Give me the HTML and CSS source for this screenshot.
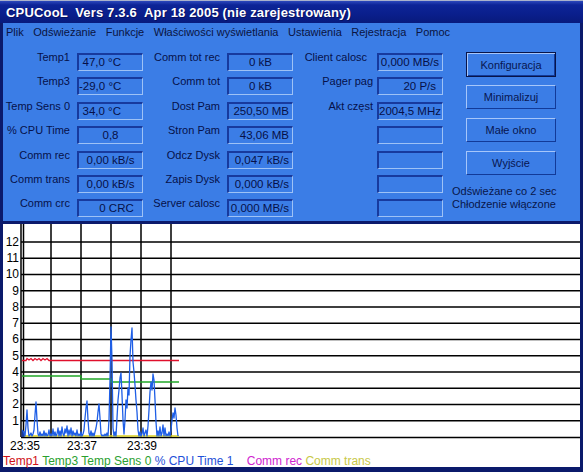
FILE: index.html
```html
<!DOCTYPE html>
<html lang="pl">
<head>
    <meta charset="UTF-8">
    <title>CPUCooL</title>
    <link rel="stylesheet" href="styles.css">
</head>
<body>
<div class="window">
    <div class="titlebar">CPUCooL  Vers 7.3.6  Apr 18 2005 (nie zarejestrowany)</div>
    <div class="frame">
        <div class="menubar">
            <span>Plik</span>
            <span>Odświeżanie</span>
            <span>Funkcje</span>
            <span>Właściwości wyświetlania</span>
            <span>Ustawienia</span>
            <span>Rejestracja</span>
            <span>Pomoc</span>
        </div>

        <div class="panel">
            <div class="grid">
                <div class="lbl">Temp1</div><div class="fld t">47,0 °C</div>
                <div class="lbl">Comm tot rec</div><div class="fld c">0 kB</div>
                <div class="lbl l3 cl">Client calosc</div><div class="fld r">0,000 MB/s</div>

                <div class="lbl">Temp3</div><div class="fld t">-29,0 °C</div>
                <div class="lbl">Comm tot</div><div class="fld c">0 kB</div>
                <div class="lbl l3">Pager pag</div><div class="fld r p6">20 P/s</div>

                <div class="lbl">Temp Sens 0</div><div class="fld t">34,0 °C</div>
                <div class="lbl">Dost Pam</div><div class="fld r">250,50 MB</div>
                <div class="lbl l3">Akt częst</div><div class="fld r">2004,5 MHz</div>

                <div class="lbl">% CPU Time</div><div class="fld c">0,8</div>
                <div class="lbl">Stron Pam</div><div class="fld r">43,06 MB</div>
                <div class="lbl l3"></div><div class="fld"></div>

                <div class="lbl">Comm rec</div><div class="fld c">0,00 kB/s</div>
                <div class="lbl">Odcz Dysk</div><div class="fld r">0,047 kB/s</div>
                <div class="lbl l3"></div><div class="fld"></div>

                <div class="lbl">Comm trans</div><div class="fld c">0,00 kB/s</div>
                <div class="lbl">Zapis Dysk</div><div class="fld r">0,000 kB/s</div>
                <div class="lbl l3"></div><div class="fld"></div>

                <div class="lbl">Comm crc</div><div class="fld c crc">0 CRC</div>
                <div class="lbl">Server calosc</div><div class="fld r">0,000 MB/s</div>
                <div class="lbl l3"></div><div class="fld"></div>
            </div>

            <div class="side">
                <div class="btn default">Konfiguracja</div>
                <div class="btn">Minimalizuj</div>
                <div class="btn">Małe okno</div>
                <div class="btn">Wyjście</div>
                <div class="status">Odświeżane co 2 sec<br>Chłodzenie włączone</div>
            </div>
        </div>

        <div class="chart">
            <svg width="577" height="231" viewBox="3 224 577 231">
                <!-- grid -->
                <path class="grid-h" d="M21 242H580 M21 258.25H580 M21 274.5H580 M21 290.75H580 M21 307H580 M21 323.25H580 M21 339.5H580 M21 355.75H580 M21 372H580 M21 388.25H580 M21 404.5H580 M21 420.75H580 M21 437.5H580"/>
                <path class="grid-v" d="M21 224V437 M23.5 224V437 M51 224V437 M81 224V437 M111 224V437 M141 224V437 M171 224V437"/>

                <g class="ylab">
                    <text x="19" y="246">12</text>
                    <text x="19" y="262">11</text>
                    <text x="19" y="278">10</text>
                    <text x="19" y="294.5">9</text>
                    <text x="19" y="310.5">8</text>
                    <text x="19" y="327">7</text>
                    <text x="19" y="343">6</text>
                    <text x="19" y="359.5">5</text>
                    <text x="19" y="375.5">4</text>
                    <text x="19" y="392">3</text>
                    <text x="19" y="408">2</text>
                    <text x="19" y="424.5">1</text>
                </g>
                <g class="xlab">
                    <text x="10" y="450">23:35</text>
                    <text x="67" y="450">23:37</text>
                    <text x="127" y="450">23:39</text>
                </g>

                <!-- series -->
                <path class="s-yellow" d="M22 436H179"/>
                <path class="s-green" d="M22 376H81V379H111V382H179"/>
                <polyline class="s-red" points="22,360.5 26,360.5 27,358.5 29,360 31,358.5 33,360.5 35,358.5 37,360 39,358.5 41,360.5 43,358.5 45,360 47,358.5 49,360.5 179,360.5"/>
                <rect class="s-blk" x="21.5" y="431" width="3" height="6"/>
                <polyline class="s-blue" points="22,430 23,431 24,433 25,436 26,425 27,410 28,428 29,436 30,435 31,433 32,436 33,434 34,430 35,415 36,402 37,420 38,434 39,436 40,432 41,436 42,434 43,436 44,431 45,436 46,433 47,436 48,435 49,430 50,436 51,434 52,436 53,429 54,436 55,432 56,436 57,434 58,428 59,436 60,431 61,436 62,427 63,434 64,436 65,429 66,433 67,426 68,436 69,430 70,435 71,428 72,436 73,431 74,435 75,433 76,436 77,430 78,436 79,434 80,436 81,432 82,436 83,434 84,430 85,418 86,408 87,401 88,420 89,433 90,436 91,431 92,436 93,433 94,436 95,432 96,428 97,422 98,412 99,404 100,418 101,434 102,436 103,435 104,436 105,434 106,436 107,433 108,436 109,420 110,380 111,327 112,360 113,428 114,436 115,432 116,436 117,418 118,400 119,390 120,378 121,373 122,395 123,420 124,434 125,420 126,400 127,408 128,388 129,395 130,356 131,340 132,328 133,362 134,372 135,385 136,400 137,412 138,430 139,436 140,432 141,436 142,434 143,428 144,436 145,433 146,430 147,436 148,426 149,410 150,392 151,382 152,390 153,374 154,380 155,400 156,422 157,436 158,431 159,436 160,427 161,436 162,433 163,425 164,436 165,428 166,436 167,434 168,436 169,432 170,436 171,430 172,420 173,413 174,418 175,408 176,415 177,428 178,436"/>
            </svg>
            <div class="legend">
                <span class="c-red">Temp1</span>
                <span class="c-green">Temp3</span>
                <span class="c-green">Temp Sens 0</span>
                <span class="c-blue">% CPU Time 1</span>
                <span class="c-mag">Comm rec</span>
                <span class="c-yel">Comm trans</span>
            </div>
        </div>
    </div>
</div>
</body>
</html>
```

FILE: styles.css
```css
body {
    margin: 0;
    font-family: "Liberation Sans", Arial, sans-serif;
    background-color: #0b1a6b;
}
.window {
    width: 583px;
    height: 472px;
    display: flex;
    flex-direction: column;
    background-color: #0b1a6b;
    overflow: hidden;
}
.titlebar {
    height: 20px;
    padding: 2px 0 0 6px;
    border-top: 1px solid #aab2cc;
    background: linear-gradient(#2c48bc 0, #0d2497 4px, #0a1f8c 60%, #081a7c 100%);
    color: #fff;
    font-size: 13px;
    font-weight: bold;
    letter-spacing: 0.17px;
    line-height: 20px;
    white-space: pre;
    text-shadow: 1px 1px 0 #061060;
}
.frame {
    flex: 1;
    display: flex;
    flex-direction: column;
    padding: 0 3px 5px 3px;
}
.menubar {
    height: 19px;
    padding-left: 3px;
    display: flex;
    gap: 9.5px;
    background-color: #3b7de6;
    color: #0a1442;
    font-size: 11px;
    line-height: 19px;
}
.panel {
    height: 182px;
    box-sizing: border-box;
    padding-top: 11px;
    border-bottom: 3px solid #0b1a6b;
    display: flex;
    background-color: #3b7de6;
}
.grid {
    display: grid;
    grid-template-columns: 74px 66px 84px 66px 84px 66px;
    grid-auto-rows: 18px;
    row-gap: 6.4px;
}
.lbl {
    padding-right: 7px;
    margin-top: -2px;
    text-align: right;
    font-size: 11px;
    line-height: 13px;
    color: #06114a;
    white-space: nowrap;
}
.lbl.l3 {
    padding-right: 4px;
}
.lbl.cl {
    padding-right: 10px;
}
.fld {
    box-sizing: border-box;
    border-top: 2px solid #173a9e;
    border-left: 2px solid #173a9e;
    border-right: 1px solid #9ec2f6;
    border-bottom: 1px solid #9ec2f6;
    font-size: 11.5px;
    line-height: 15px;
    color: #061048;
    white-space: nowrap;
    overflow: hidden;
}
.fld.c {
    text-align: center;
}
.fld.r {
    text-align: right;
    padding-right: 3px;
}
.fld.p6 {
    padding-right: 6px;
}
.fld.t {
    text-align: right;
    padding-right: 21px;
}
.fld.crc {
    padding-left: 12px;
}
.side {
    width: 90px;
    margin-left: 23px;
    margin-top: -1px;
    display: flex;
    flex-direction: column;
}
.btn {
    height: 24px;
    box-sizing: border-box;
    margin-bottom: 9px;
    border: 1px solid;
    border-color: #a6c6fa #123a98 #123a98 #a6c6fa;
    display: flex;
    align-items: center;
    justify-content: center;
    font-size: 11px;
    color: #081650;
}
.btn.default {
    height: 25px;
    margin-bottom: 8px;
    border-color: #081448;
    box-shadow: inset 1px 1px 0 #a6c6fa, inset -1px -1px 0 #123a98;
}
.status {
    margin-left: -14px;
    margin-top: 1px;
    font-size: 11px;
    line-height: 12.5px;
    color: #08164a;
    white-space: nowrap;
}
.chart {
    height: 243px;
    background-color: #fff;
    display: flex;
    flex-direction: column;
}
.chart svg {
    display: block;
}
.grid-h, .grid-v {
    fill: none;
    stroke: #000;
    stroke-width: 1.5;
}
.ylab text {
    font-size: 12px;
    text-anchor: end;
    fill: #000;
}
.xlab text {
    font-size: 12px;
    fill: #000;
}
.s-yellow, .s-green, .s-red, .s-blue {
    fill: none;
    stroke-width: 1.3;
}
.s-yellow { stroke: #d8d020; }
.s-green { stroke: #22a828; }
.s-red { stroke: #e0102c; }
.s-blue { stroke: #1e5ee6; stroke-linejoin: round; }
.s-blk { fill: #1a3a9a; }
.legend {
    height: 12px;
    font-size: 12px;
    line-height: 12px;
    white-space: nowrap;
}
.c-red { color: #d01018; }
.c-green { color: #2aa030; }
.c-blue { color: #1e50d8; }
.c-mag { color: #d024d0; margin-left: 10px; }
.c-yel { color: #c8c848; }
```
